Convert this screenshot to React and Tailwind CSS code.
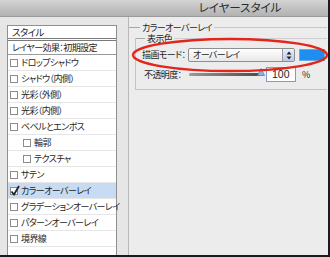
import React from 'react';

const items = [
  { label: 'ドロップシャドウ' },
  { label: 'シャドウ（内側）' },
  { label: '光彩（外側）' },
  { label: '光彩（内側）' },
  { label: 'ベベルとエンボス' },
  { label: '輪郭', indent: true },
  { label: 'テクスチャ', indent: true },
  { label: 'サテン' },
  { label: 'カラーオーバーレイ', checked: true, active: true },
  { label: 'グラデーションオーバーレイ' },
  { label: 'パターンオーバーレイ' },
  { label: '境界線' },
];

const Check = ({ checked }) => (
  <span className="relative w-[8px] h-[8px] shrink-0 border border-[#8c8c8c] bg-white">
    {checked && (
      <svg className="absolute -left-[1px] -top-[3px]" width="10" height="11" viewBox="0 0 10 11">
        <path d="M1.5 6.5 L4 9.5 L9 1" fill="none" stroke="#222" strokeWidth="1.8" />
      </svg>
    )}
  </span>
);

const Row = ({ item }) => (
  <div
    className={`h-[16px] flex items-center gap-[3px] border-b border-[#e6e6e6] ${
      item.indent ? 'pl-[15px]' : 'pl-[2px]'
    } ${item.active ? 'bg-[#c7dcf3]' : 'bg-white'}`}
  >
    <Check checked={item.checked} />
    <span className="leading-none whitespace-nowrap">{item.label}</span>
  </div>
);

const App = () => {
  return (
    <div className="relative w-[330px] h-[257px] overflow-hidden bg-[#e9e9e9] text-[9px] text-[#1e1e1e] font-['Noto_Sans_CJK_JP','Liberation_Sans',sans-serif] [font-feature-settings:'palt'] tracking-[-0.6px] border-r-2 border-b-2 border-[#1a1a1a]">
      {/* title bar */}
      <div className="h-[17px] flex items-center justify-center pl-[152px] bg-gradient-to-b from-[#d4d4d4] to-[#b2b2b2] border-b border-[#9a9a9a] text-[11.5px] leading-none tracking-[0px] text-[#2a2a2a]">
        レイヤースタイル
      </div>

      <div className="flex h-[238px]">
        {/* left list */}
        <div className="w-[129px] pl-[7px] pr-[11px] pt-[8px] border-r border-[#b9b9b9] bg-[#e6e6e6]">
          <div className="h-full border border-b-0 border-[#8f8f8f] bg-white flex flex-col">
            <div className="h-[15px] flex items-center pl-[4px] border-b-[3px] border-double border-[#7a7a7a] text-[9.5px]">
              スタイル
            </div>
            <div className="h-[14px] flex items-center pl-[4px] border-b border-[#9a9a9a]">
              レイヤー効果：初期設定
            </div>
            {items.map((item) => (
              <Row key={item.label} item={item} />
            ))}
            <div className="flex-1 bg-white" />
          </div>
        </div>

        {/* right panel */}
        <div className="flex-1 bg-[#ececec] pt-[4px] pr-[1px]">
          <div className="h-[12px] flex items-center">
            <div className="w-[11px] h-px bg-[#a8a8a8]" />
            <span className="px-[2px] leading-none">カラーオーバーレイ</span>
            <div className="flex-1 h-px bg-[#c8c8c8]" />
          </div>
          <div className="ml-[6px] mt-[5px] h-[52px] border-l border-b border-[#c4c4c4] flex flex-col">
            <div className="h-[1px] flex items-center">
              <div className="w-[9px] h-px bg-[#a8a8a8]" />
              <span className="px-[2px] leading-none bg-[#ececec]">表示色</span>
              <div className="flex-1 h-px bg-[#cfcfcf]" />
            </div>
            <div className="mt-[9px] h-[14px] flex items-center pl-[6px]">
              <span className="w-[46px] whitespace-nowrap">描画モード：</span>
              <div className="w-[107px] h-[14px] flex items-stretch border border-[#8e8e8e] bg-gradient-to-b from-white to-[#e8e8e8] rounded-[2px]">
                <span className="flex-1 flex items-center pl-[4px]">オーバーレイ</span>
                <span className="w-[12px] flex items-center justify-center border-l border-[#9a9a9a] bg-gradient-to-b from-[#e8eefa] to-[#b9c9e6]">
                  <svg width="6" height="9" viewBox="0 0 6 9">
                    <path d="M3 0.5 L5.5 3.5 H0.5 Z M3 8.5 L5.5 5.5 H0.5 Z" fill="#222" />
                  </svg>
                </span>
              </div>
              <div className="ml-[4px] w-[26px] h-[12px] bg-[#1f8ef1] border border-[#6fa9e0]" />
            </div>
            <div className="mt-[5px] h-[15px] flex items-center pl-[8px]">
              <span className="w-[45px] whitespace-nowrap">不透明度：</span>
              <div className="relative w-[72px] h-[3px] bg-gradient-to-r from-[#9a9a9a] to-[#4a4a4a] rounded-full">
                <svg className="absolute -right-[4px] -top-[5px]" width="8" height="8" viewBox="0 0 8 8">
                  <path d="M4 0.5 L7.5 7.5 H0.5 Z" fill="#8fb3de" stroke="#5d7fb0" strokeWidth="0.8" />
                </svg>
              </div>
              <div className="ml-[5px] w-[30px] h-[15px] border border-[#7a9cd0] bg-white flex items-center pl-[5px] text-[10.5px] tracking-[0px] font-['Liberation_Sans',sans-serif]">
                100
              </div>
              <span className="ml-[6px]">%</span>
            </div>
          </div>
        </div>
      </div>

      {/* red annotation ellipse */}
      <svg className="absolute left-0 top-0 pointer-events-none" width="330" height="257">
        <ellipse cx="230" cy="55" rx="97" ry="16" fill="none" stroke="#e3261c" strokeWidth="2.4" />
      </svg>
    </div>
  );
};

export default App;
